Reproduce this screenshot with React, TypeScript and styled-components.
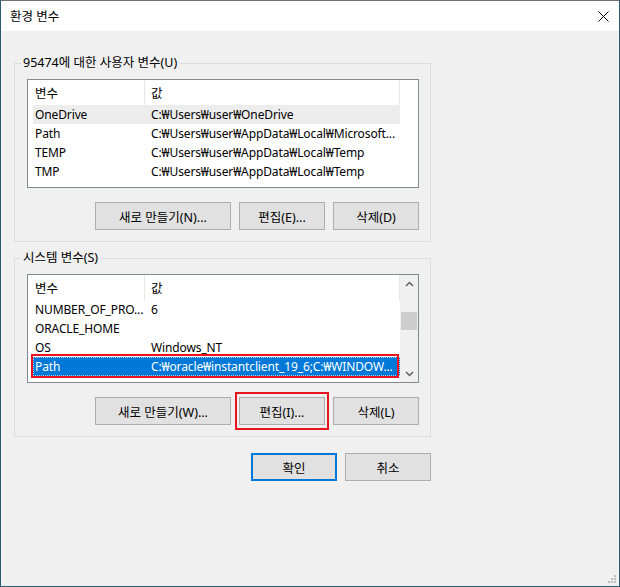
import React from 'react';
import styled, { createGlobalStyle, css } from 'styled-components';

const FONT = `"Noto Sans", "Noto Sans CJK KR", sans-serif`;

const GlobalStyle = createGlobalStyle`
  html, body { margin: 0; padding: 0; background: #f0f0f0; }
  * { box-sizing: border-box; }
`;

const Window = styled.div`
  position: relative;
  width: 620px;
  height: 587px;
  overflow: hidden;
  display: flex;
  flex-direction: column;
  background: #f0f0f0;
  border: 1px solid #2c5b72;
  border-top-color: #707070;
  font-family: ${FONT};
  font-size: 12px;
  color: #000;
`;

const TitleBar = styled.div`
  height: 30px;
  flex: none;
  display: flex;
  align-items: center;
  justify-content: space-between;
  padding: 1px 10px 0 9px;
  background: #fff;
`;

const Title = styled.span`
  font-size: 12.5px;
  line-height: 16px;
`;

const CloseIcon = styled.svg`
  width: 11px;
  height: 11px;
  display: block;
`;

const Body = styled.div`
  display: flex;
  flex-direction: column;
  padding: 32px 0 0 13px;
`;

const Group = styled.section<{ $gap?: number }>`
  position: relative;
  width: 417px;
  margin-top: ${(p) => p.$gap ?? 0}px;
  border: 1px solid #dcdcdc;
  padding: 15px 11px 11px 12px;
  display: flex;
  flex-direction: column;
`;

const Legend = styled.span`
  position: absolute;
  top: -9px;
  left: 6px;
  padding: 0 2px;
  line-height: 16px;
  font-size: 12.5px;
  background: #f0f0f0;
  white-space: nowrap;
`;

const ListBox = styled.div`
  width: 392px;
  height: 109px;
  border: 1px solid #828790;
  background: #fff;
  display: flex;
`;

const ListContent = styled.div`
  width: 372px;
  padding-left: 5px;
  display: flex;
  flex-direction: column;
`;

const HeaderRow = styled.div`
  display: grid;
  grid-template-columns: 112px 255px;
  height: 25px;
`;

const HeaderCell = styled.div<{ $pad: number }>`
  display: flex;
  align-items: center;
  padding-left: ${(p) => p.$pad}px;
  border-right: 1px solid #e5e5e5;
  white-space: nowrap;
  font-size: 12.5px;
`;

const Row = styled.div<{ $state?: 'hover' | 'selected'; $marked?: boolean }>`
  position: relative;
  display: grid;
  grid-template-columns: 112px 255px;
  height: 19px;
  align-items: center;
  ${(p) =>
    p.$state === 'hover' &&
    css`
      background: #ededed;
    `}
  ${(p) =>
    p.$state === 'selected' &&
    css`
      background: #0078d7;
      color: #fff;
      outline: 1px dotted #9fd0ff;
      outline-offset: -1px;
    `}
  ${(p) =>
    p.$marked &&
    css`
      &::after {
        content: '';
        position: absolute;
        left: -2px;
        right: 1px;
        top: -3px;
        bottom: -2px;
        border: 2px solid #e8131f;
        pointer-events: none;
      }
    `}
`;

const Cell = styled.div<{ $pad: number }>`
  padding-left: ${(p) => p.$pad}px;
  white-space: nowrap;
  overflow: hidden;
  line-height: 19px;
  letter-spacing: -0.12px;
`;

const ScrollBar = styled.div`
  width: 18px;
  display: flex;
  flex-direction: column;
  align-items: center;
  background: #f0f0f0;
`;

const ArrowBox = styled.div`
  height: 17px;
  width: 100%;
  display: flex;
  align-items: center;
  justify-content: center;
`;

const Track = styled.div`
  flex: 1;
  width: 100%;
  display: flex;
  flex-direction: column;
  align-items: center;
`;

const Thumb = styled.div<{ $offset: number }>`
  width: 16px;
  height: 18px;
  margin-top: ${(p) => p.$offset}px;
  background: #cdcdcd;
`;

const ButtonRow = styled.div<{ $top: number }>`
  display: flex;
  justify-content: flex-end;
  gap: 8px;
  margin-top: ${(p) => p.$top}px;
`;

const Button = styled.button<{ $w: number; $default?: boolean; $marked?: boolean }>`
  position: relative;
  width: ${(p) => p.$w}px;
  height: 28px;
  padding: 0;
  margin: 0;
  font-family: ${FONT};
  font-size: 12.5px;
  color: #000;
  background: #e1e1e1;
  border: ${(p) => (p.$default ? '2px solid #0078d7' : '1px solid #adadad')};
  white-space: nowrap;
  ${(p) =>
    p.$marked &&
    css`
      &::after {
        content: '';
        position: absolute;
        left: -5px;
        right: -5px;
        top: -6px;
        bottom: -6px;
        border: 2px solid #e8131f;
        pointer-events: none;
      }
    `}
`;

const Footer = styled.div`
  width: 417px;
  display: flex;
  justify-content: flex-end;
  gap: 8px;
  margin-top: 16px;
`;

const Grip = styled.svg`
  position: absolute;
  right: 3px;
  bottom: 3px;
  width: 9px;
  height: 9px;
`;

type Item = { name: string; value: string; state?: 'hover' | 'selected'; marked?: boolean };

const userVars: Item[] = [
  { name: 'OneDrive', value: 'C:₩Users₩user₩OneDrive', state: 'hover' },
  { name: 'Path', value: 'C:₩Users₩user₩AppData₩Local₩Microsoft...' },
  { name: 'TEMP', value: 'C:₩Users₩user₩AppData₩Local₩Temp' },
  { name: 'TMP', value: 'C:₩Users₩user₩AppData₩Local₩Temp' },
];

const sysVars: Item[] = [
  { name: 'NUMBER_OF_PRO...', value: '6' },
  { name: 'ORACLE_HOME', value: '' },
  { name: 'OS', value: 'Windows_NT' },
  { name: 'Path', value: 'C:₩oracle₩instantclient_19_6;C:₩WINDOW...', state: 'selected', marked: true },
];

const Chevron = ({ up }: { up?: boolean }) => (
  <svg width="9" height="6" viewBox="0 0 9 6">
    <path
      d={up ? 'M1 5 L4.5 1.5 L8 5' : 'M1 1 L4.5 4.5 L8 1'}
      fill="none"
      stroke="#606060"
      strokeWidth="1.5"
    />
  </svg>
);

const List = ({ items, scroll }: { items: Item[]; scroll?: boolean }) => (
  <ListBox>
    <ListContent>
      <HeaderRow>
        <HeaderCell $pad={2}>변수</HeaderCell>
        <HeaderCell $pad={6}>값</HeaderCell>
      </HeaderRow>
      {items.map((it) => (
        <Row key={it.name} $state={it.state} $marked={it.marked}>
          <Cell $pad={2}>{it.name}</Cell>
          <Cell $pad={6}>{it.value}</Cell>
        </Row>
      ))}
    </ListContent>
    {scroll && (
      <ScrollBar>
        <ArrowBox>
          <Chevron up />
        </ArrowBox>
        <Track>
          <Thumb $offset={20} />
        </Track>
        <ArrowBox>
          <Chevron />
        </ArrowBox>
      </ScrollBar>
    )}
  </ListBox>
);

export default function App() {
  return (
    <>
      <GlobalStyle />
      <Window>
        <TitleBar>
          <Title>환경 변수</Title>
          <CloseIcon viewBox="0 0 11 11">
            <path d="M0.5 0.5 L10.5 10.5 M10.5 0.5 L0.5 10.5" stroke="#000" strokeWidth="1" />
          </CloseIcon>
        </TitleBar>
        <Body>
          <Group>
            <Legend>95474에 대한 사용자 변수(U)</Legend>
            <List items={userVars} />
            <ButtonRow $top={14}>
              <Button $w={136}>새로 만들기(N)...</Button>
              <Button $w={86}>편집(E)...</Button>
              <Button $w={86}>삭제(D)</Button>
            </ButtonRow>
          </Group>
          <Group $gap={16}>
            <Legend>시스템 변수(S)</Legend>
            <List items={sysVars} scroll />
            <ButtonRow $top={14}>
              <Button $w={136}>새로 만들기(W)...</Button>
              <Button $w={86} $marked>
                편집(I)...
              </Button>
              <Button $w={86}>삭제(L)</Button>
            </ButtonRow>
          </Group>
          <Footer>
            <Button $w={86} $default>
              확인
            </Button>
            <Button $w={86}>취소</Button>
          </Footer>
        </Body>
        <Grip viewBox="0 0 9 9">
          <rect x="7" y="1" width="2" height="2" fill="#bdbdbd" />
          <rect x="4" y="4" width="2" height="2" fill="#bdbdbd" />
          <rect x="7" y="4" width="2" height="2" fill="#bdbdbd" />
          <rect x="1" y="7" width="2" height="2" fill="#bdbdbd" />
          <rect x="4" y="7" width="2" height="2" fill="#bdbdbd" />
          <rect x="7" y="7" width="2" height="2" fill="#bdbdbd" />
        </Grip>
      </Window>
    </>
  );
}
